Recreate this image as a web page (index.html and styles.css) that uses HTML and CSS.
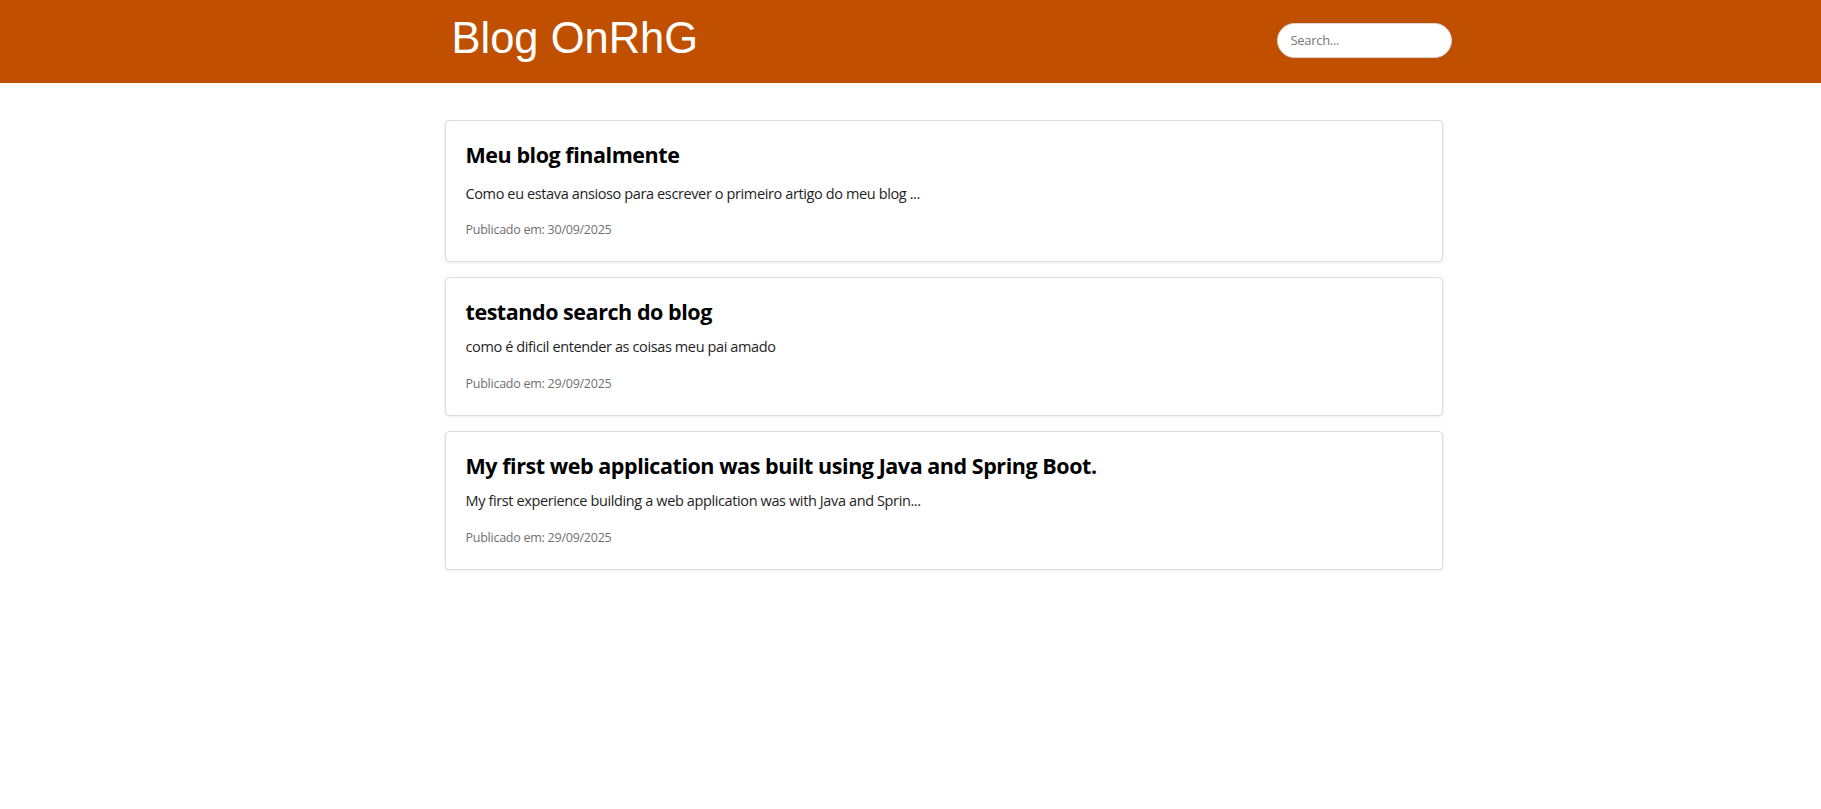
FILE: index.html
```html
<!DOCTYPE html>
<html lang="pt-BR">
<head>
<meta charset="utf-8">
<title>Blog OnRhG</title>
<link rel="stylesheet" href="styles.css">
</head>
<body>
<header class="site-header">
  <div class="header-inner">
    <h1 class="brand">Blog OnRhG</h1>
    <input class="search" type="text" placeholder="Search...">
  </div>
</header>
<main class="main">
  <div class="posts">
    <article class="post post--rich">
      <h2 class="post-title">Meu blog finalmente</h2>
      <p class="post-excerpt">Como eu estava ansioso para escrever o primeiro artigo do meu blog ...</p>
      <p class="post-date">Publicado em: 30/09/2025</p>
    </article>
    <article class="post">
      <h2 class="post-title">testando search do blog</h2>
      <p class="post-excerpt">como é dificil entender as coisas meu pai amado</p>
      <p class="post-date">Publicado em: 29/09/2025</p>
    </article>
    <article class="post">
      <h2 class="post-title">My first web application was built using Java and Spring Boot.</h2>
      <p class="post-excerpt">My first experience building a web application was with Java and Sprin...</p>
      <p class="post-date">Publicado em: 29/09/2025</p>
    </article>
  </div>
</main>
</body>
</html>
```
FILE: styles.css
```css
* { box-sizing: border-box; }
html, body { margin: 0; padding: 0; background: #fff; }
body { font-family: "Open Sans", "Noto Sans", sans-serif; color: #222; }

.site-header {
  background: #c05000;
  height: 83px;
  padding-left: 82px;
}
.header-inner {
  width: 1000px;
  height: 100%;
  margin: 0 auto;
  display: flex;
  align-items: center;
  justify-content: space-between;
}
.brand {
  margin: 0 0 7px 0;
  font-family: "Liberation Sans", Arial, sans-serif;
  font-weight: 400;
  font-size: 43.5px;
  line-height: 50px;
  color: #fff;
}
.search {
  width: 175px;
  height: 35px;
  margin: 0 0 3px 0;
  padding: 0 13px;
  border: 1px solid #d6d6d6;
  border-radius: 18px;
  background: #fff;
  font-family: "Open Sans", sans-serif;
  font-size: 13px;
  letter-spacing: -0.3px;
  color: #333;
  outline: none;
}
.search::placeholder { color: #767676; }

.main {
  padding: 37px 0 40px 66px;
}
.posts {
  width: 998px;
  margin: 0 auto;
  display: flex;
  flex-direction: column;
  gap: 15px;
}
.post {
  border: 1px solid #dcdcdc;
  border-radius: 4px;
  background: #fff;
  box-shadow: 0 1px 3px rgba(0,0,0,0.08);
  padding: 20px 20px 21px;
}
.post-title {
  margin: 0;
  font-size: 21.5px;
  line-height: 28px;
  font-weight: 700;
  color: #000;
  letter-spacing: -0.45px;
}
.post-excerpt {
  margin: 9px 0 0;
  font-size: 14.5px;
  line-height: 24px;
  letter-spacing: -0.38px;
  color: #1e1e1e;
}
.post-date {
  margin: 15px 0 0;
  font-size: 12.5px;
  line-height: 20px;
  letter-spacing: -0.25px;
  color: #707070;
}
.post--rich .post-excerpt { margin-top: 13px; }
.post--rich .post-date { margin-top: 14px; }
```
